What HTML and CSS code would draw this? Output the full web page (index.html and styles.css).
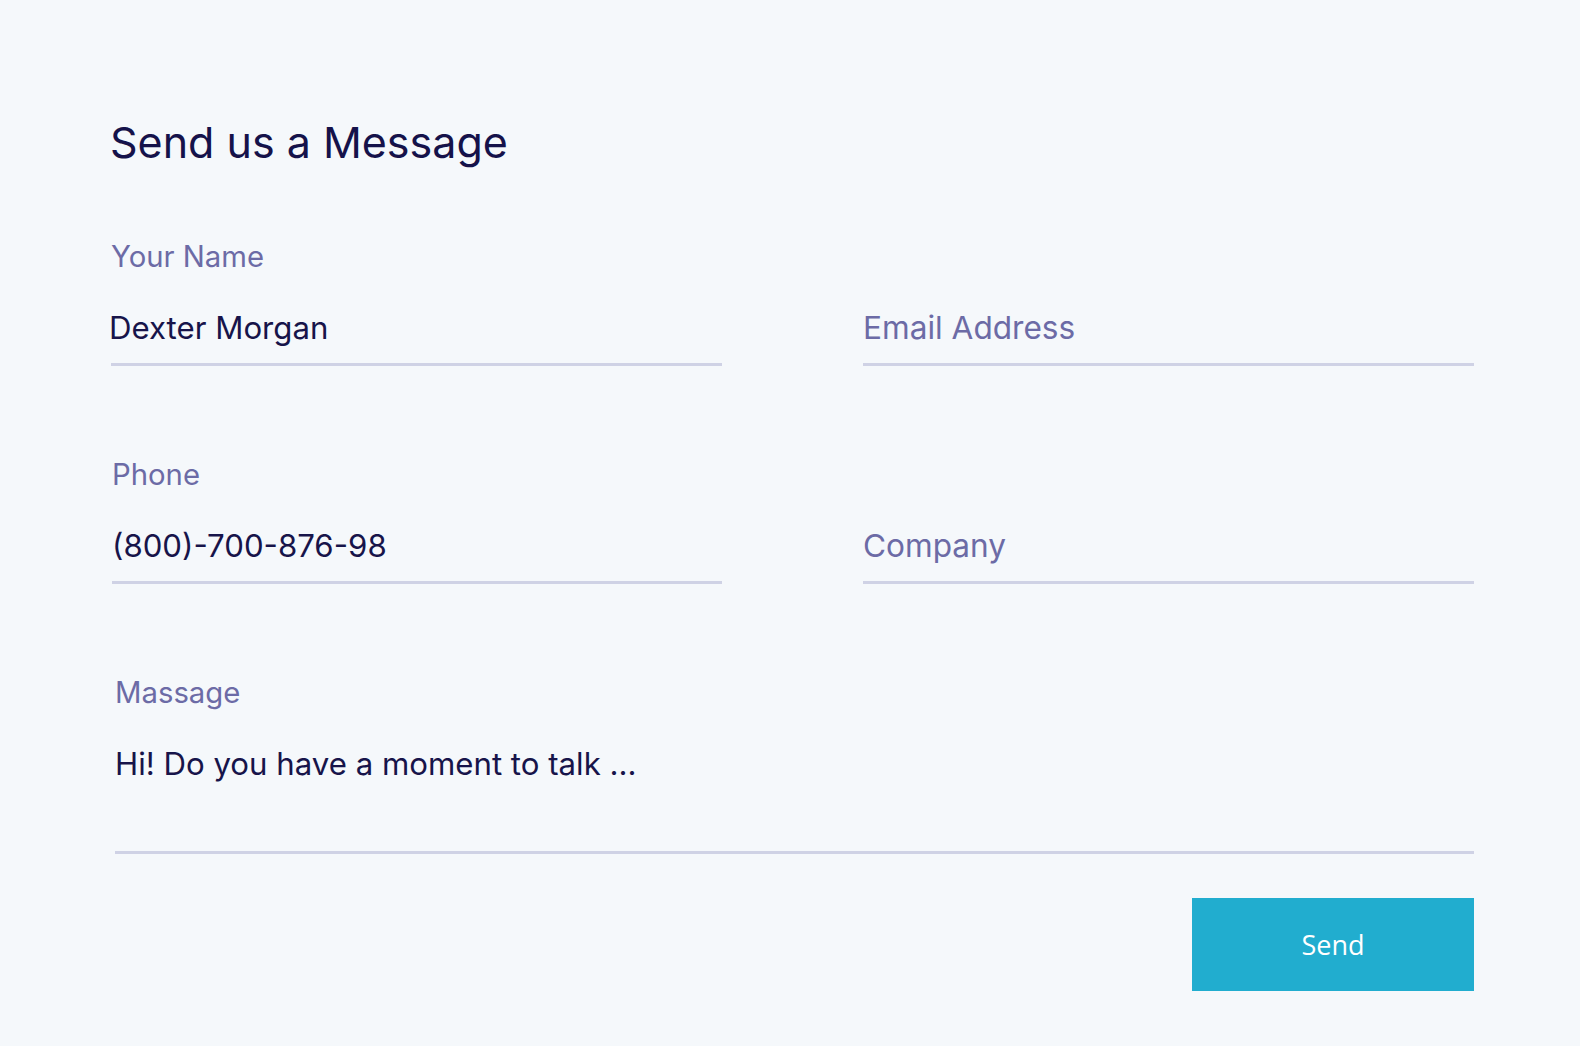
FILE: index.html
```html
<!DOCTYPE html>
<html lang="en">
<head>
<meta charset="utf-8">
<title>Send us a Message</title>
<link rel="stylesheet" href="styles.css">
</head>
<body>
<main class="page">
  <h1 class="title">Send us a Message</h1>
  <form class="form">
    <div class="row row-1">
      <div class="field">
        <div class="label">Your Name</div>
        <div class="value value-shift">Dexter Morgan</div>
      </div>
      <div class="field">
        <div class="label"></div>
        <div class="value placeholder">Email Address</div>
      </div>
    </div>
    <div class="row row-2">
      <div class="field">
        <div class="label">Phone</div>
        <div class="value">(800)-700-876-98</div>
      </div>
      <div class="field">
        <div class="label"></div>
        <div class="value placeholder">Company</div>
      </div>
    </div>
    <div class="row row-3">
      <div class="field">
        <div class="label">Massage</div>
        <div class="value value-message">Hi! Do you have a moment to talk ...</div>
      </div>
    </div>
    <div class="actions">
      <button type="button" class="send">Send</button>
    </div>
  </form>
</main>
</body>
</html>
```
FILE: styles.css
```css
html, body {
  margin: 0;
  padding: 0;
  background: #f5f8fb;
}

body {
  font-family: "Inter", "Lato", sans-serif;
  color: #17144a;
}

.page {
  padding: 116px 106px 0 110px;
}

.title {
  margin: 0 0 69px 0;
  font-size: 43px;
  line-height: 52px;
  font-weight: 400;
  color: #15124a;
}

.form {
  display: flex;
  flex-direction: column;
}

.row {
  display: grid;
  grid-template-columns: 1fr 611px;
  column-gap: 141px;
}

.row-1 {
  padding-left: 1px;
}

.row-2 {
  padding-left: 2px;
  margin-top: 89px;
}

.row-3 {
  padding-left: 5px;
  margin-top: 89px;
  grid-template-columns: 1fr;
}

.field {
  display: flex;
  flex-direction: column;
}

.label {
  height: 40px;
  font-size: 29.3px;
  line-height: 40px;
  color: #6c6ba6;
  margin-bottom: 31px;
}

.value {
  font-size: 31.2px;
  line-height: 40px;
  color: #17144a;
  padding-bottom: 15px;
  border-bottom: 3px solid #cfd2e5;
}

.value-shift {
  text-indent: -2px;
}

.placeholder {
  color: #6c6ba6;
  font-size: 31.6px;
}

.value-message {
  padding-bottom: 67px;
}

.actions {
  display: flex;
  justify-content: flex-end;
  margin-top: 44px;
}

.send {
  width: 282px;
  height: 93px;
  border: 0;
  border-radius: 0;
  padding: 0;
  background: #21adcf;
  color: #ffffff;
  font-family: "Open Sans", "Noto Sans", sans-serif;
  font-size: 27px;
  font-weight: 400;
  cursor: pointer;
}
```
